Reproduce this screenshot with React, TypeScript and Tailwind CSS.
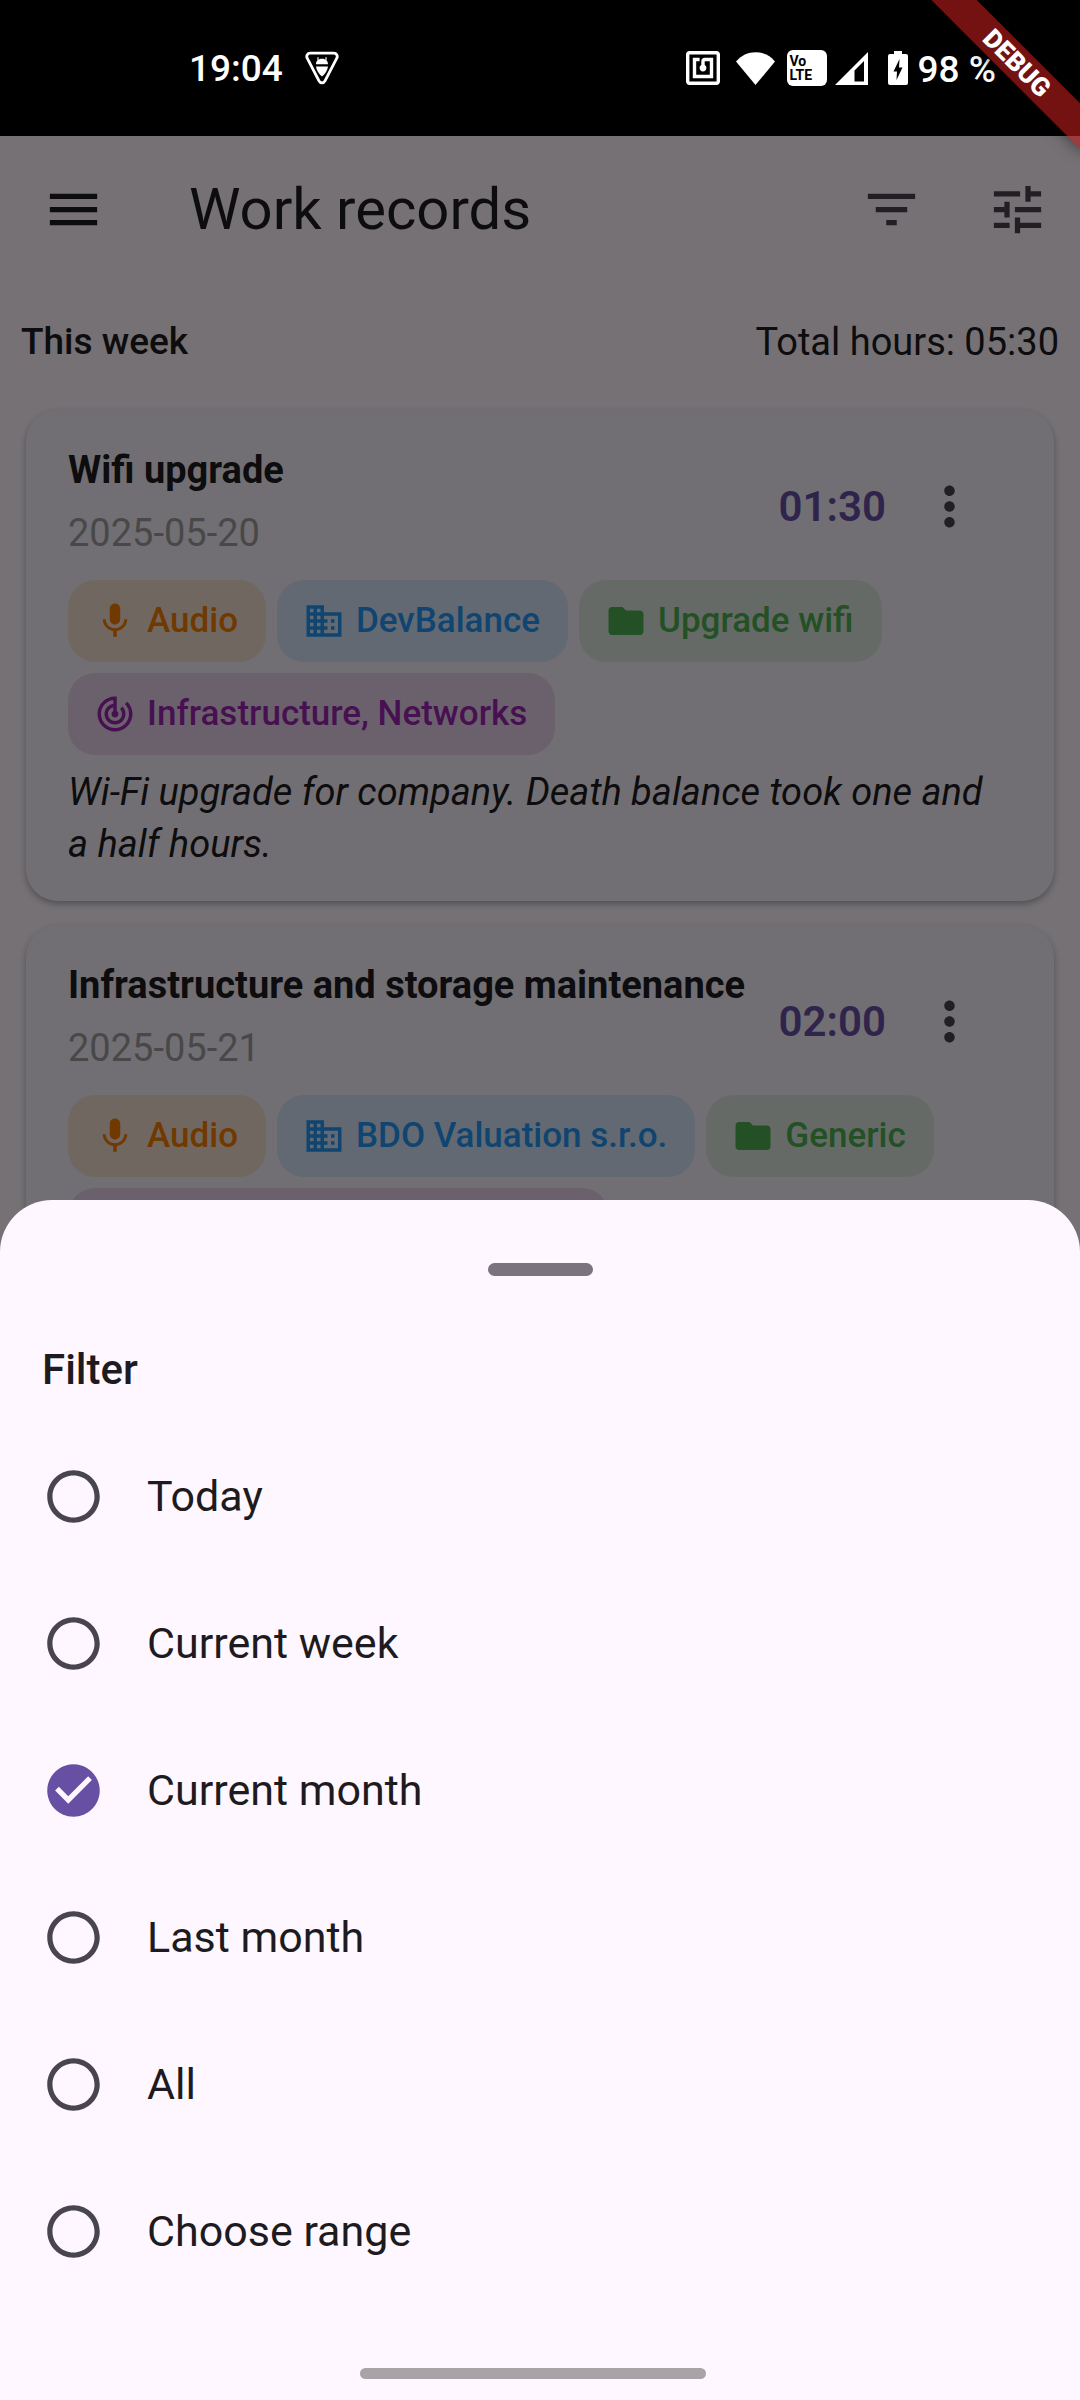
import { useState } from "react";
import type { ReactNode } from "react";
import type { IconType } from "react-icons";
import {
  MdBusiness,
  MdCheckCircle,
  MdFilterList,
  MdFolder,
  MdMenu,
  MdMic,
  MdMoreVert,
  MdRadioButtonUnchecked,
  MdTrackChanges,
  MdTune,
} from "react-icons/md";

type ChipKind = "type" | "company" | "project" | "category";

type WorkRecord = {
  title: string;
  date: string;
  hours: string;
  chips: { kind: ChipKind; label: string }[];
  note: string;
};

const records: WorkRecord[] = [
  {
    title: "Wifi upgrade",
    date: "2025-05-20",
    hours: "01:30",
    chips: [
      { kind: "type", label: "Audio" },
      { kind: "company", label: "DevBalance" },
      { kind: "project", label: "Upgrade wifi" },
      { kind: "category", label: "Infrastructure, Networks" },
    ],
    note: "Wi-Fi upgrade for company. Death balance took one and a half hours.",
  },
  {
    title: "Infrastructure and storage maintenance",
    date: "2025-05-21",
    hours: "02:00",
    chips: [
      { kind: "type", label: "Audio" },
      { kind: "company", label: "BDO Valuation s.r.o." },
      { kind: "project", label: "Generic" },
      { kind: "category", label: "Infrastructure, Maintenance" },
    ],
    note: "",
  },
];

const filters = ["Today", "Current week", "Current month", "Last month", "All", "Choose range"];

const chipLook: Record<ChipKind, { Icon: IconType; className: string }> = {
  type: { Icon: MdMic, className: "bg-[#f57c00]/15 text-[#f57c00]" },
  company: { Icon: MdBusiness, className: "bg-[#2196f3]/15 text-[#2196f3]" },
  project: { Icon: MdFolder, className: "bg-[#4caf50]/15 text-[#4caf50]" },
  category: { Icon: MdTrackChanges, className: "bg-[#9c27b0]/15 text-[#9c27b0]" },
};

function StatusBar() {
  return (
    <div className="relative z-20 flex h-[136px] items-center justify-between bg-black pl-[189px] pr-[84px] text-[37px] font-medium leading-none text-white">
      <div className="flex items-center gap-[22px]">
        <span>19:04</span>
        <svg className="h-[34px] w-[34px]" viewBox="0 0 34 34" aria-hidden="true">
          <path
            d="M5.200 2.200h23.600c2.700 0 4.200 2.600 3 4.900L20 29.800c-1.300 2.600-4.700 2.600-6 0L2.200 7.100C1 4.800 2.500 2.200 5.200 2.200z"
            fill="none"
            stroke="#fff"
            strokeWidth="2.800"
          />
          <path d="M11 13.200c0-3 2.200-5.400 6-5.400s6 2.400 6 5.400zM11 15.500h12c-.4 3.500-2.900 7.500-6 10-3.100-2.500-5.600-6.500-6-10z" fill="#fff" />
          <path d="M13 6.200v3M21 6.200v3" stroke="#fff" strokeWidth="1.200" />
        </svg>
      </div>
      <div className="flex items-center">
        <svg className="h-[34px] w-[34px]" viewBox="2 2 20 20" fill="#fff" aria-hidden="true">
          <path d="M20 2H4c-1.100 0-2 .9-2 2v16c0 1.100.9 2 2 2h16c1.100 0 2-.9 2-2V4c0-1.100-.9-2-2-2zm0 18H4V4h16v16zM18 6h-5c-1.100 0-2 .9-2 2v2.280c-.6.35-1 .98-1 1.720 0 1.100.9 2 2 2s2-.9 2-2c0-.74-.4-1.380-1-1.720V8h3v8H8V8h2V6H6v12h12V6z" />
        </svg>
        <svg className="ml-4 h-[33px] w-[39px]" viewBox="0 0 39 33" fill="#fff" aria-hidden="true">
          <path d="M0 9.500C10-3 29-3 39 9.500L19.500 33z" />
        </svg>
        <span className="ml-3 flex h-9 w-10 flex-col justify-center rounded-md bg-white pl-[3px] text-[14px] font-bold leading-[14px] text-black">
          <span>Vo</span>
          <span>LTE</span>
        </span>
        <svg className="ml-2 h-[33px] w-[33px]" viewBox="0 0 33 33" fill="#fff" aria-hidden="true">
          <path fillRule="evenodd" d="M0 33 33 0v33zM19.500 18.500v11H29V9z" />
        </svg>
        <svg className="ml-5 h-[34px] w-[20px]" viewBox="0 0 20 34" aria-hidden="true">
          <path d="M6 0h8v3h4a2 2 0 0 1 2 2v27a2 2 0 0 1-2 2H2a2 2 0 0 1-2-2V5a2 2 0 0 1 2-2h4z" fill="#fff" />
          <path d="M11.500 8 5.500 20.500h3.500L8.500 29l6-12.500H11z" fill="#000" />
        </svg>
        <span className="ml-2.5 pt-0.5">98 %</span>
      </div>
    </div>
  );
}

function DebugBanner() {
  return (
    <div className="pointer-events-none absolute right-0 top-0 z-30 h-[170px] w-[170px] overflow-hidden">
      <div className="absolute -right-[47px] top-[47px] flex h-8 w-[220px] rotate-45 items-center justify-center bg-[#b71c1c]/63 text-[26px] font-black leading-none text-white shadow-[0_0_16px_rgba(0,0,0,0.5)]">
        DEBUG
      </div>
    </div>
  );
}

function IconButton({ label, children }: { label: string; children: ReactNode }) {
  return (
    <button type="button" aria-label={label} className="flex h-[126px] w-[126px] shrink-0 items-center justify-center text-[63px]">
      {children}
    </button>
  );
}

function Chip({ kind, label }: { kind: ChipKind; label: string }) {
  const { Icon, className } = chipLook[kind];
  return (
    <span className={`flex h-[82px] items-center gap-[11px] rounded-[27px] pl-[26px] pr-7 text-[35px] font-medium ${className}`}>
      <Icon className="h-[42px] w-[42px]" />
      {label}
    </span>
  );
}

function RecordCard({ record }: { record: WorkRecord }) {
  return (
    <article className="rounded-[32px] bg-[#f7f2fa] px-[42px] pb-[31px] pt-[33px] shadow-[0_3px_6px_rgba(0,0,0,0.3)]">
      <div className="flex items-center">
        <div className="min-w-0 flex-1 self-start pt-px">
          <h3 className="truncate text-[38px] font-bold leading-[52px]">{record.title}</h3>
          <p className="mt-[11px] text-[38px] leading-[52px] text-[#9e9e9e]">{record.date}</p>
        </div>
        <span className="text-[42px] font-semibold text-[#6750a4]">{record.hours}</span>
        <IconButton label="Record menu">
          <MdMoreVert className="text-[#49454f]" />
        </IconButton>
      </div>
      <div className="mt-[11px] flex flex-wrap gap-[11px]">
        {record.chips.map((chip) => (
          <Chip key={chip.label} kind={chip.kind} label={chip.label} />
        ))}
      </div>
      {record.note && <p className="mt-[11px] pr-4 text-[38px] italic leading-[52px]">{record.note}</p>}
    </article>
  );
}

function FilterSheet() {
  const [selected, setSelected] = useState("Current month");
  return (
    <section className="absolute inset-x-0 bottom-0 z-10 flex flex-col rounded-t-[52px] bg-[#fef7ff] pb-[21px] pt-[63px]">
      <div className="h-[13px] w-[105px] self-center rounded-full bg-[#79747e]" />
      <fieldset className="mt-[62px]">
        <legend className="px-[42px] text-[42px] font-medium leading-[63px]">Filter</legend>
        <div className="mt-[22px]">
          {filters.map((name) => (
            <label key={name} className="flex h-[147px] items-center gap-[42px] px-[42px] text-[43px]">
              <input
                type="radio"
                name="filter"
                value={name}
                checked={selected === name}
                onChange={() => setSelected(name)}
                className="sr-only"
              />
              {selected === name ? (
                <MdCheckCircle className="h-[63px] w-[63px] text-[#6750a4]" />
              ) : (
                <MdRadioButtonUnchecked className="h-[63px] w-[63px] text-[#49454f]" />
              )}
              {name}
            </label>
          ))}
        </div>
      </fieldset>
      <div className="ml-[33.333%] mt-[63px] h-[11px] w-[32%] rounded-full bg-[#a7a3a7]" />
    </section>
  );
}

export default function App() {
  return (
    <div className="relative flex h-screen flex-col overflow-hidden bg-[#fef7ff] font-[Roboto,sans-serif] text-[#1d1b20]">
      <StatusBar />
      <header className="flex h-[147px] items-center pl-[10px]">
        <IconButton label="Open menu">
          <MdMenu />
        </IconButton>
        <h1 className="ml-[53px] flex-1 text-[58px]">Work records</h1>
        <div className="flex text-[#49454f]">
          <IconButton label="Filter">
            <MdFilterList />
          </IconButton>
          <IconButton label="Settings">
            <MdTune />
          </IconButton>
        </div>
      </header>
      <main className="flex-1">
        <div className="flex h-[118px] items-center justify-between px-[21px] text-[38px]">
          <h2 className="text-[37px] font-medium">This week</h2>
          <p>Total hours: 05:30</p>
        </div>
        <div className="flex flex-col gap-6 px-[26px] pt-[9px]">
          {records.map((record) => (
            <RecordCard key={record.title} record={record} />
          ))}
        </div>
      </main>
      <div className="absolute inset-0 bg-black/54" />
      <FilterSheet />
      <DebugBanner />
    </div>
  );
}
